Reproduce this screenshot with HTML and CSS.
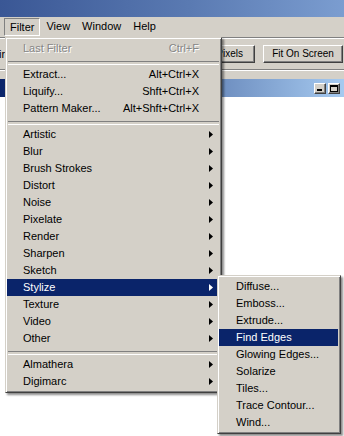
FILE: index.html
```html
<!DOCTYPE html>
<html>
<head>
<meta charset="utf-8">
<link rel="stylesheet" href="styles.css">
</head>
<body>
<div class="app">
  <div class="titlebar"></div>
  <div class="menubar">
    <span class="mb-item pressed">Filter</span>
    <span class="mb-item">View</span>
    <span class="mb-item">Window</span>
    <span class="mb-item">Help</span>
  </div>
  <div class="toolbar">
    <span class="tb-label">ir</span>
    <div class="tb-buttons">
      <span class="tb-btn px">Pixels</span>
      <span class="tb-btn fit">Fit On Screen</span>
    </div>
  </div>
  <div class="doc">
    <div class="doc-title">
      <span class="wbtn"><span class="min-glyph"></span></span>
      <span class="wbtn"><span class="max-glyph"></span></span>
    </div>
    <div class="doc-body"></div>
  </div>
</div>

<div class="menu filter-menu">
  <div class="item disabled"><span>Last Filter</span><span class="sc">Ctrl+F</span></div>
  <div class="sep"></div>
  <div class="item"><span>Extract...</span><span class="sc">Alt+Ctrl+X</span></div>
  <div class="item"><span>Liquify...</span><span class="sc">Shft+Ctrl+X</span></div>
  <div class="item"><span>Pattern Maker...</span><span class="sc">Alt+Shft+Ctrl+X</span></div>
  <div class="sep"></div>
  <div class="item sub"><span>Artistic</span><svg class="arr" width="4" height="7" viewBox="0 0 4 7"><polygon points="0,0 4,3.5 0,7"/></svg></div>
  <div class="item sub"><span>Blur</span><svg class="arr" width="4" height="7" viewBox="0 0 4 7"><polygon points="0,0 4,3.5 0,7"/></svg></div>
  <div class="item sub"><span>Brush Strokes</span><svg class="arr" width="4" height="7" viewBox="0 0 4 7"><polygon points="0,0 4,3.5 0,7"/></svg></div>
  <div class="item sub"><span>Distort</span><svg class="arr" width="4" height="7" viewBox="0 0 4 7"><polygon points="0,0 4,3.5 0,7"/></svg></div>
  <div class="item sub"><span>Noise</span><svg class="arr" width="4" height="7" viewBox="0 0 4 7"><polygon points="0,0 4,3.5 0,7"/></svg></div>
  <div class="item sub"><span>Pixelate</span><svg class="arr" width="4" height="7" viewBox="0 0 4 7"><polygon points="0,0 4,3.5 0,7"/></svg></div>
  <div class="item sub"><span>Render</span><svg class="arr" width="4" height="7" viewBox="0 0 4 7"><polygon points="0,0 4,3.5 0,7"/></svg></div>
  <div class="item sub"><span>Sharpen</span><svg class="arr" width="4" height="7" viewBox="0 0 4 7"><polygon points="0,0 4,3.5 0,7"/></svg></div>
  <div class="item sub"><span>Sketch</span><svg class="arr" width="4" height="7" viewBox="0 0 4 7"><polygon points="0,0 4,3.5 0,7"/></svg></div>
  <div class="item sub active"><span>Stylize</span><svg class="arr" width="4" height="7" viewBox="0 0 4 7"><polygon points="0,0 4,3.5 0,7"/></svg></div>
  <div class="item sub"><span>Texture</span><svg class="arr" width="4" height="7" viewBox="0 0 4 7"><polygon points="0,0 4,3.5 0,7"/></svg></div>
  <div class="item sub"><span>Video</span><svg class="arr" width="4" height="7" viewBox="0 0 4 7"><polygon points="0,0 4,3.5 0,7"/></svg></div>
  <div class="item sub"><span>Other</span><svg class="arr" width="4" height="7" viewBox="0 0 4 7"><polygon points="0,0 4,3.5 0,7"/></svg></div>
  <div class="sep"></div>
  <div class="item sub"><span>Almathera</span><svg class="arr" width="4" height="7" viewBox="0 0 4 7"><polygon points="0,0 4,3.5 0,7"/></svg></div>
  <div class="item sub"><span>Digimarc</span><svg class="arr" width="4" height="7" viewBox="0 0 4 7"><polygon points="0,0 4,3.5 0,7"/></svg></div>
</div>

<div class="menu sub-menu">
  <div class="item"><span>Diffuse...</span></div>
  <div class="item"><span>Emboss...</span></div>
  <div class="item"><span>Extrude...</span></div>
  <div class="item active"><span>Find Edges</span></div>
  <div class="item"><span>Glowing Edges...</span></div>
  <div class="item"><span>Solarize</span></div>
  <div class="item"><span>Tiles...</span></div>
  <div class="item"><span>Trace Contour...</span></div>
  <div class="item"><span>Wind...</span></div>
</div>
</body>
</html>
```

FILE: styles.css
```css
* { box-sizing: border-box; }
html, body {
  margin: 0;
  padding: 0;
}
body {
  width: 344px;
  height: 436px;
  overflow: hidden;
  background: #d4d0c8;
  font-family: "Liberation Sans", Arial, sans-serif;
  font-size: 11px;
  color: #000;
  position: relative;
}
.app {
  display: flex;
  flex-direction: column;
  height: 436px;
}
.titlebar {
  height: 17px;
  background: linear-gradient(to right, #3a5795, #5a7ab2 55%, #7b9dd0);
}
.menubar {
  height: 20px;
  display: flex;
  align-items: center;
  padding-left: 4px;
}
.mb-item {
  height: 18px;
  line-height: 17px;
  padding: 0 6px;
}
.mb-item.pressed {
  padding: 0 5px;
  border: 1px solid;
  border-color: #808080 #fff #fff #808080;
}
.toolbar {
  height: 33px;
  border-top: 1px solid #808080;
  border-bottom: 1px solid #808080;
  box-shadow: inset 0 1px #fff, 0 1px #fff;
  display: flex;
  align-items: flex-start;
  padding-top: 7px;
}
.tb-label {
  font-size: 11px;
  line-height: 18px;
  margin-left: -1px;
}
.tb-buttons {
  margin-left: auto;
  padding-right: 1px;
  display: flex;
  gap: 8px;
}
.tb-btn {
  height: 18px;
  font-size: 10px;
  line-height: 16px;
  text-align: center;
  white-space: nowrap;
  border: 1px solid;
  border-color: #fff #404040 #404040 #fff;
  box-shadow: inset -1px -1px #808080;
}
.tb-btn.px {
  width: 83px;
  text-align: right;
  padding-right: 11px;
}
.tb-btn.fit { width: 80px; }
.doc {
  margin-top: 9px;
  flex: 1;
  display: flex;
  flex-direction: column;
}
.doc-title {
  height: 18px;
  background: linear-gradient(to right, #0a246a, #a6caf0);
  display: flex;
  justify-content: flex-end;
  align-items: center;
  gap: 2px;
  padding-right: 4px;
}
.wbtn {
  width: 12px;
  height: 11px;
  background: #d4d0c8;
  border: 1px solid;
  border-color: #fff #404040 #404040 #fff;
  box-shadow: inset -1px -1px #808080;
  position: relative;
}
.min-glyph {
  position: absolute;
  left: 2px;
  bottom: 2px;
  width: 5px;
  height: 2px;
  background: #000;
}
.max-glyph {
  position: absolute;
  left: 1px;
  top: 1px;
  width: 8px;
  height: 7px;
  border: 1px solid #000;
  border-top-width: 2px;
}
.doc-body {
  flex: 1;
  background: #fff;
}
.menu {
  position: absolute;
  background: #d4d0c8;
  border: 1px solid;
  border-color: #d4d0c8 #404040 #404040 #d4d0c8;
  box-shadow: inset 1px 1px #fff, inset -1px -1px #808080, 2px 2px 2px rgba(0, 0, 0, 0.45);
  padding: 2px 1px;
}
.filter-menu {
  left: 5px;
  top: 37px;
  width: 217px;
}
.sub-menu {
  left: 217px;
  top: 275px;
  width: 124px;
  padding-right: 2px;
}
.item {
  height: 17px;
  line-height: 17px;
  display: flex;
  align-items: center;
  justify-content: space-between;
  padding-left: 16px;
  padding-right: 21px;
  white-space: nowrap;
}
.sub-menu .item {
  padding-left: 17px;
}
.item.sub {
  padding-right: 7px;
}
.arr {
  display: block;
  fill: #000;
}
.item.active {
  background: #0a246a;
  color: #fff;
}
.item.active .arr {
  fill: #fff;
}
.item.disabled {
  color: #868686;
  text-shadow: 1px 1px 0 #fff;
}
.sep {
  height: 9px;
  padding-top: 4px;
  margin: 0 1px;
}
.sep::before {
  content: "";
  display: block;
  height: 2px;
  border-top: 1px solid #808080;
  border-bottom: 1px solid #fff;
}
```
